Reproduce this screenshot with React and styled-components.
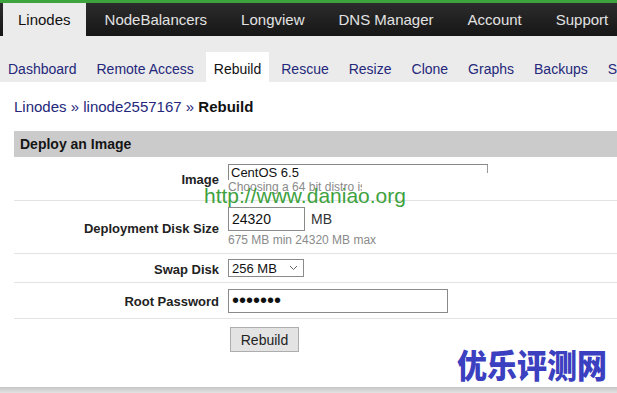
import React from "react";
import styled, { createGlobalStyle } from "styled-components";

const Global = createGlobalStyle`
  html, body { margin: 0; padding: 0; }
  body {
    font-family: "Liberation Sans", Arial, sans-serif;
    background: #e4e4e4;
    overflow: hidden;
  }
`;

const Page = styled.div`
  position: relative;
  width: 617px;
  height: 393px;
  display: flex;
  flex-direction: column;
  overflow: hidden;
`;

const TopBar = styled.nav`
  border-top: 3px solid #3da33d;
  height: 33px;
  background: linear-gradient(#2c2c2c, #161616);
  display: flex;
  gap: 4px;
  padding-left: 3px;
  flex-shrink: 0;
`;

const TopTab = styled.div`
  padding: 0 15px;
  line-height: 33px;
  font-size: 15px;
  white-space: nowrap;
  color: ${(p) => (p.$active ? "#111" : "#e2e2e2")};
  background: ${(p) => (p.$active ? "#ebebeb" : "transparent")};
`;

const SubNav = styled.div`
  height: 46px;
  background: #ebebeb;
  display: flex;
  align-items: flex-end;
  gap: 4px;
  flex-shrink: 0;
`;

const SubTab = styled.div`
  height: 30px;
  line-height: 35px;
  padding: 0 8px;
  font-size: 14px;
  white-space: nowrap;
  color: ${(p) => (p.$active ? "#111" : "#25287a")};
  background: ${(p) => (p.$active ? "#fff" : "transparent")};
`;

const Main = styled.main`
  flex: 1;
  background: #fff;
  padding-left: 14px;
`;

const Breadcrumb = styled.div`
  margin: 16px 0 15px;
  font-size: 15px;
  line-height: 18px;
  color: #25287a;
  b { color: #111; }
`;

const SectionHeader = styled.div`
  height: 26px;
  line-height: 27px;
  background: #cbcbcb;
  padding-left: 6px;
  font-weight: bold;
  font-size: 14px;
  color: #151515;
`;

const Row = styled.div`
  display: grid;
  grid-template-columns: 205px 1fr;
  column-gap: 9px;
  align-items: ${(p) => (p.$top ? "start" : "center")};
  height: ${(p) => p.$h}px;
  box-sizing: border-box;
  border-bottom: ${(p) => (p.$last ? "none" : "1px solid #e3e3e3")};
`;

const Label = styled.div`
  text-align: right;
  font-weight: bold;
  font-size: 13px;
  color: #222;
  padding-top: 2px;
`;

const Field = styled.div`
  display: flex;
  flex-direction: column;
  align-items: flex-start;
`;

const Inline = styled.div`
  display: flex;
  align-items: center;
  gap: 6px;
`;

const ImageSelect = styled.div`
  position: relative;
  width: 257px;
  height: 15px;
  border-top: 1px solid #888;
  border-left: 1px solid #888;
  font-size: 13px;
  line-height: 16px;
  padding-left: 2px;
  color: #111;
  &::after {
    content: "";
    position: absolute;
    right: 0;
    top: 0;
    width: 1px;
    height: 8px;
    background: #999;
  }
`;

const Hint = styled.div`
  font-size: 12px;
  line-height: 14px;
  color: #8a8a8a;
  white-space: nowrap;
  overflow: hidden;
  max-width: ${(p) => (p.$clip ? `${p.$clip}px` : "none")};
  margin-top: ${(p) => p.$mt || 0}px;
`;

const TextInput = styled.input`
  width: ${(p) => p.$w}px;
  height: ${(p) => p.$hgt}px;
  box-sizing: border-box;
  border: 1px solid #8a8a8a;
  padding: 0 3px;
  font-family: "Liberation Sans", Arial, sans-serif;
  font-size: ${(p) => p.$fs || 14}px;
  color: #111;
  outline: none;
  margin: 0;
`;

const Unit = styled.span`
  font-size: 14px;
  color: #333;
`;

const Select = styled.div`
  width: 76px;
  height: 18px;
  box-sizing: border-box;
  border: 1px solid #8a8a8a;
  display: flex;
  align-items: center;
  justify-content: space-between;
  padding: 0 5px 0 3px;
  font-size: 13px;
  color: #111;
`;

const ButtonCell = styled.div`
  padding: 8px 0 0 2px;
`;

const Button = styled.button`
  width: 69px;
  height: 25px;
  background: #e3e3e3;
  border: 1px solid #adadad;
  font-family: "Liberation Sans", Arial, sans-serif;
  font-size: 14px;
  color: #222;
  padding: 0;
`;

const Shadow = styled.div`
  height: 6px;
  flex-shrink: 0;
  background: linear-gradient(#c6c6c6, #e2e2e2);
`;

const UrlMark = styled.div`
  position: absolute;
  left: 204px;
  top: 185px;
  font-size: 21px;
  line-height: 21px;
  color: #3ea23e;
  white-space: nowrap;
`;

const CnMark = styled.div`
  position: absolute;
  left: 457px;
  top: 346px;
  font-family: "Noto Sans CJK SC", sans-serif;
  font-weight: 900;
  font-size: 30px;
  line-height: 34px;
  color: #3b40c0;
  transform: scaleY(1.08);
  transform-origin: top left;
  white-space: nowrap;
`;

const topTabs = ["Linodes", "NodeBalancers", "Longview", "DNS Manager", "Account", "Support"];
const subTabs = ["Dashboard", "Remote Access", "Rebuild", "Rescue", "Resize", "Clone", "Graphs", "Backups", "Settings"];

export default function App() {
  return (
    <>
      <Global />
      <Page>
        <TopBar>
          {topTabs.map((t) => (
            <TopTab key={t} $active={t === "Linodes"}>{t}</TopTab>
          ))}
        </TopBar>
        <SubNav>
          {subTabs.map((t) => (
            <SubTab key={t} $active={t === "Rebuild"}>{t}</SubTab>
          ))}
        </SubNav>
        <Main>
          <Breadcrumb>
            Linodes » linode2557167 » <b>Rebuild</b>
          </Breadcrumb>
          <SectionHeader>Deploy an Image</SectionHeader>
          <Row $h={44}>
            <Label>Image</Label>
            <Field>
              <ImageSelect>CentOS 6.5</ImageSelect>
              <Hint $clip={134} $mt={0}>Choosing a 64 bit distro is recommended</Hint>
            </Field>
          </Row>
          <Row $h={53}>
            <Label>Deployment Disk Size</Label>
            <Field>
              <Inline>
                <TextInput $w={77} $hgt={24} defaultValue="24320" readOnly />
                <Unit>MB</Unit>
              </Inline>
              <Hint $mt={2}>675 MB min 24320 MB max</Hint>
            </Field>
          </Row>
          <Row $h={29}>
            <Label>Swap Disk</Label>
            <Field>
              <Select>
                <span>256 MB</span>
                <svg width="9" height="6" viewBox="0 0 9 6">
                  <path d="M1 1 L4.5 4.5 L8 1" fill="none" stroke="#666" strokeWidth="1" />
                </svg>
              </Select>
            </Field>
          </Row>
          <Row $h={36}>
            <Label>Root Password</Label>
            <Field>
              <TextInput $w={220} $hgt={24} $fs={20} type="password" defaultValue="1234567" readOnly />
            </Field>
          </Row>
          <Row $h={42} $last $top>
            <div />
            <ButtonCell>
              <Button>Rebuild</Button>
            </ButtonCell>
          </Row>
        </Main>
        <Shadow />
        <UrlMark>http://www.daniao.org</UrlMark>
        <CnMark>优乐评测网</CnMark>
      </Page>
    </>
  );
}
